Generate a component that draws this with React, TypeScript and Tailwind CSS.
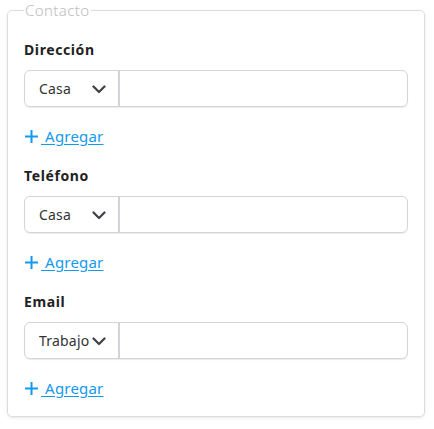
const sections = [
  { label: "Dirección", type: "Casa" },
  { label: "Teléfono", type: "Casa" },
  { label: "Email", type: "Trabajo" },
];

function Chevron() {
  return (
    <svg width="14" height="10" viewBox="0 0 14 10" fill="none" className="shrink-0">
      <path d="M1.5 2.5 7 8l5.5-5.5" stroke="#3f3f46" strokeWidth="2.2" strokeLinecap="round" strokeLinejoin="round" />
    </svg>
  );
}

function Plus() {
  return (
    <svg width="13" height="13" viewBox="0 0 13 13" fill="none" className="shrink-0">
      <path d="M0 6.5h13M6.5 0v13" stroke="#1399ee" strokeWidth="2" />
    </svg>
  );
}

export default function App() {
  return (
    <div className="w-[434px] h-[429px] bg-white" style={{ fontFamily: "'Noto Sans', sans-serif" }}>
      <fieldset className="ml-[7px] w-[418px] border border-[#dcdcdc] rounded-[5px] px-4 pt-5 pb-[18px] shadow-[0_1px_3px_rgba(0,0,0,0.10)]">
        <legend className="text-[15px] leading-5 font-light tracking-[0.4px] text-[#bdbdbd] px-[1px]">Contacto</legend>
        {sections.map((s, i) => (
          <div key={s.label} className={i > 0 ? "mt-5" : ""}>
            <div className="text-sm leading-5 font-bold tracking-[0.6px] text-[#222]">{s.label}</div>
            <div className="mt-[10px] flex h-[37px] border border-[#d4d4d8] rounded-[6px] shadow-[0_1px_1px_rgba(0,0,0,0.08)]">
              <div className="w-[95px] flex items-center justify-between pl-[14px] pr-[12px] border-r-2 border-[#d4d4d8] text-sm tracking-[0.2px] text-[#333]">
                <span>{s.type}</span>
                <Chevron />
              </div>
              <div className="flex-1" />
            </div>
            <div className="mt-[19px] h-5 flex items-center pl-[1px]">
              <Plus />
              <span className="ml-[3px] text-[15px] leading-5 tracking-[0.2px] text-[#1399ee] underline underline-offset-2 whitespace-pre">{" Agregar"}</span>
            </div>
          </div>
        ))}
      </fieldset>
    </div>
  );
}
